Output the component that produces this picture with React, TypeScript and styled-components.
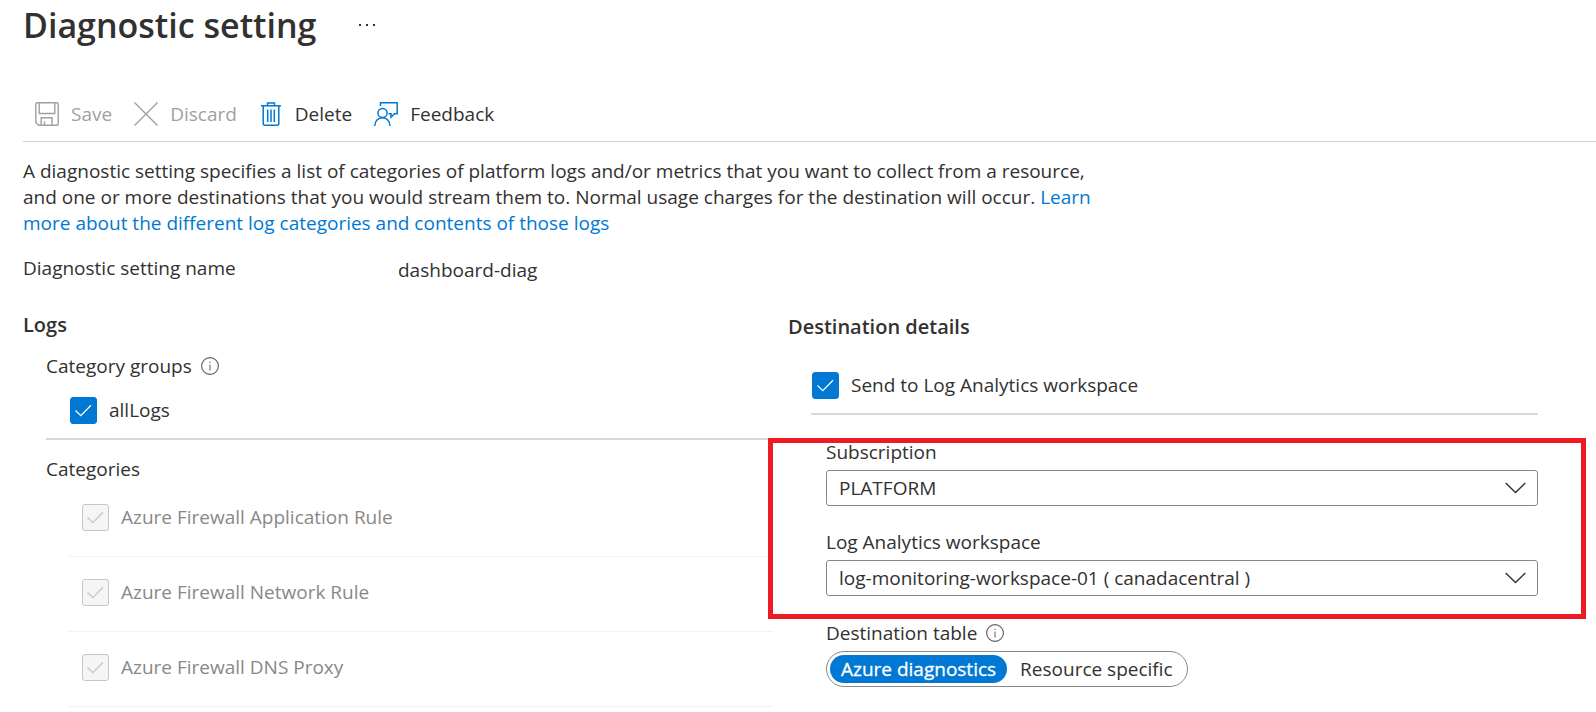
import React, { useState } from "react";
import styled, { createGlobalStyle, css } from "styled-components";

const blue = "#0078d4";
const ink = "#323130";

const GlobalStyle = createGlobalStyle`
  *, *::before, *::after { box-sizing: border-box; }
  body {
    margin: 0;
    background: #fff;
    color: ${ink};
    font-family: "Segoe UI", "Open Sans", "Noto Sans", sans-serif;
    font-size: 19px;
    line-height: 26px;
  }
  button, input, select { font: inherit; color: inherit; }
`;

const Page = styled.main`
  padding-left: 23px;
`;

const TitleBar = styled.header`
  display: flex;
  align-items: center;
  gap: 42px;
  height: 50px;
`;

const Title = styled.h1`
  margin: 0;
  font-size: 34px;
  line-height: 50px;
  font-weight: 600;
`;

const MoreButton = styled.button`
  display: flex;
  padding: 0;
  border: 0;
  background: none;
`;

const Toolbar = styled.nav`
  display: flex;
  align-items: center;
  gap: 22px;
  margin-top: 36px;
  padding: 0 12px;
  height: 56px;
  border-bottom: 1px solid #d2d0ce;
`;

const ToolButton = styled.button`
  display: flex;
  align-items: center;
  gap: 12px;
  padding: 0;
  border: 0;
  background: none;
  white-space: nowrap;

  &:disabled { color: #a19f9d; }
`;

const Intro = styled.p`
  max-width: 1090px;
  margin: 16px 0 0;
`;

const Link = styled.a`
  color: ${blue};
  text-decoration: none;
`;

const NameRow = styled.dl`
  display: grid;
  grid-template-columns: 375px 1fr;
  margin: 19px 0 0;
`;

const NameLabel = styled.dt``;

const NameValue = styled.dd`
  margin: 0;
  padding-top: 2px;
`;

const Columns = styled.div`
  display: grid;
  grid-template-columns: 1fr 1fr;
  gap: 15px;
  margin-top: 29px;
  padding-right: 58px;
`;

const Column = styled.section<{ $drop?: boolean }>`
  min-width: 0;
  padding-top: ${(p) => (p.$drop ? 2 : 0)}px;
`;

const Heading = styled.h2`
  margin: 0;
  font-size: 20px;
  line-height: 26px;
  font-weight: 600;
`;

const LogsBody = styled.div`
  margin: 15px 0 0 23px;
`;

const Caption = styled.div`
  display: flex;
  align-items: center;
  gap: 9px;
`;

const GroupRow = styled.div`
  padding: 18px 0 14px 24px;
  border-bottom: 2px solid #d9d8d7;
  margin-bottom: 16px;
`;

const CategoryList = styled.ul`
  list-style: none;
  margin: 0 0 0 22px;
  padding: 0;
`;

const CategoryItem = styled.li`
  padding: 22px 0 25px 14px;
  border-bottom: 1px solid #f3f2f1;
`;

const CheckLabel = styled.label<{ $disabled?: boolean }>`
  display: flex;
  align-items: flex-start;
  gap: 12px;
  height: 27px;
  color: ${(p) => (p.$disabled ? "#8a8886" : ink)};
`;

const CheckBox = styled.span`
  display: grid;
  width: 27px;
  height: 27px;

  > * { grid-area: 1 / 1; }
`;

const CheckInput = styled.input`
  appearance: none;
  width: 27px;
  height: 27px;
  margin: 0;
  border: 1px solid #8a8886;
  border-radius: 3px;
  background: #fff;

  & + svg { visibility: hidden; pointer-events: none; }
  &:checked { border-color: ${blue}; background: ${blue}; }
  &:checked + svg { visibility: visible; color: #fff; }
  &:disabled { border-color: #c8c6c4; background: #f5f5f4; }
  &:disabled + svg { color: #c8c6c4; }
`;

const SendRow = styled.div`
  margin: 32px 0 0 23px;
  padding: 0 0 14px 1px;
  border-bottom: 2px solid #d9d8d7;
`;

const Fields = styled.div`
  margin-left: 38px;
`;

const Marked = styled.div`
  position: relative;
  display: grid;
  gap: 23px;
  padding-top: 24px;
`;

const RedFrame = styled.div`
  position: absolute;
  inset: 23px -48px -23px -58px;
  border: 5px solid #ed1c24;
  pointer-events: none;
`;

const Field = styled.div`
  display: flex;
  flex-direction: column;
  gap: 5px;
`;

const SelectBox = styled.div`
  display: grid;
  align-items: center;

  > * { grid-area: 1 / 1; }
  > svg { justify-self: end; margin-right: 12px; pointer-events: none; }
`;

const Select = styled.select`
  appearance: none;
  width: 100%;
  height: 36px;
  padding: 0 44px 0 12px;
  border: 1px solid #8a8886;
  border-radius: 3px;
  background: #fff;
`;

const TableChoice = styled.fieldset`
  margin: 24px 0 0;
  padding: 0;
  border: 0;
  min-width: 0;
`;

const TableLegend = styled.legend`
  display: flex;
  align-items: center;
  gap: 9px;
  padding: 0;
`;

const Pill = styled.div`
  display: inline-flex;
  gap: 2px;
  margin-top: 5px;
  padding: 3px;
  border: 1px solid #8a8886;
  border-radius: 18px;
`;

const PillOption = styled.label<{ $on: boolean }>`
  display: grid;
  padding: 0 11px;
  border-radius: 14px;
  line-height: 28px;
  white-space: nowrap;
  ${(p) => p.$on && css`background: ${blue}; color: #fff; -webkit-text-stroke: 0.3px #fff;`}

  > * { grid-area: 1 / 1; }
`;

const HiddenRadio = styled.input`
  appearance: none;
  margin: 0;
`;

const SaveIcon = () => (
  <svg width="24" height="24" viewBox="0 0 24 24" fill="none" stroke="currentColor" strokeWidth="1.4" aria-hidden="true">
    <path d="M2 .8H22Q23.2 .8 23.2 2V22Q23.2 23.2 22 23.2H3.6L.8 20.4V2Q.8 .8 2 .8Z" />
    <path d="M4.2 1V11.5H19.8V1" />
    <path d="M6.2 23V15.8H17V23M9.5 23V19.3" />
  </svg>
);

const DiscardIcon = () => (
  <svg width="24" height="24" viewBox="0 0 24 24" fill="none" stroke="currentColor" strokeWidth="1.4" aria-hidden="true">
    <path d="M.5 .5L23.5 23.5M23.5 .5L.5 23.5" />
  </svg>
);

const DeleteIcon = () => (
  <svg width="24" height="24" viewBox="0 0 24 24" fill="none" stroke={blue} strokeWidth="1.5" aria-hidden="true">
    <path d="M2 3.8H22" />
    <path d="M8.5 3.5V1H15.5V3.5" />
    <path d="M4.2 4V21.5Q4.2 23.2 6 23.2H18Q19.8 23.2 19.8 21.5V4" />
    <path d="M8.7 7.5V20M12 7.5V20M15.3 7.5V20" />
  </svg>
);

const FeedbackIcon = () => (
  <svg width="24" height="24" viewBox="0 0 24 24" fill="none" stroke={blue} strokeWidth="1.5" aria-hidden="true">
    <path d="M6.5 4V.8H23.2V11.8H20.5L17 15.2V11.8H14.5" />
    <circle cx="8.5" cy="11" r="4.6" />
    <path d="M.8 24C.8 19 4 15.7 8.4 15.7S16 19 16 24" />
  </svg>
);

const InfoIcon = () => (
  <svg width="18" height="18" viewBox="0 0 18 18" fill="none" stroke="#605e5c" aria-hidden="true">
    <circle cx="9" cy="9" r="8.4" strokeWidth="1.1" />
    <path d="M9 7.5V13.5M9 4.8V6" strokeWidth="1" />
  </svg>
);

const CheckIcon = () => (
  <svg width="27" height="27" viewBox="0 0 27 27" fill="none" stroke="currentColor" strokeWidth="1.3" aria-hidden="true">
    <path d="M5.5 13.5L10.8 18.6L21 8.2" />
  </svg>
);

const ChevronIcon = () => (
  <svg width="21" height="12" viewBox="0 0 21 12" fill="none" stroke={ink} strokeWidth="1.4" aria-hidden="true">
    <path d="M.7 1L10.5 10.6L20.3 1" />
  </svg>
);

const MoreIcon = () => (
  <svg width="18" height="4" viewBox="0 0 18 4" fill={ink} aria-hidden="true">
    <rect x="1" y="1" width="2" height="2" />
    <rect x="8" y="1" width="2" height="2" />
    <rect x="15" y="1" width="2" height="2" />
  </svg>
);

type CheckProps = { label: string; disabled?: boolean };

const Check = ({ label, disabled }: CheckProps) => (
  <CheckLabel $disabled={disabled}>
    <CheckBox>
      <CheckInput type="checkbox" defaultChecked disabled={disabled} />
      <CheckIcon />
    </CheckBox>
    {label}
  </CheckLabel>
);

type DropDownProps = { id: string; label: string; value: string };

const DropDown = ({ id, label, value }: DropDownProps) => (
  <Field>
    <label htmlFor={id}>{label}</label>
    <SelectBox>
      <Select id={id}>
        <option>{value}</option>
      </Select>
      <ChevronIcon />
    </SelectBox>
  </Field>
);

const categories = [
  "Azure Firewall Application Rule",
  "Azure Firewall Network Rule",
  "Azure Firewall DNS Proxy",
];

const tables = ["Azure diagnostics", "Resource specific"];

export default function App() {
  const [table, setTable] = useState(tables[0]);

  return (
    <>
      <GlobalStyle />
      <Page>
        <TitleBar>
          <Title>Diagnostic setting</Title>
          <MoreButton type="button" aria-label="More">
            <MoreIcon />
          </MoreButton>
        </TitleBar>

        <Toolbar>
          <ToolButton type="button" disabled><SaveIcon />Save</ToolButton>
          <ToolButton type="button" disabled><DiscardIcon />Discard</ToolButton>
          <ToolButton type="button"><DeleteIcon />Delete</ToolButton>
          <ToolButton type="button"><FeedbackIcon />Feedback</ToolButton>
        </Toolbar>

        <Intro>
          A diagnostic setting specifies a list of categories of platform logs and/or metrics that you
          want to collect from a resource, and one or more destinations that you would stream them to.
          Normal usage charges for the destination will occur.{" "}
          <Link href="#learn">
            Learn more about the different log categories and contents of those logs
          </Link>
        </Intro>

        <NameRow>
          <NameLabel>Diagnostic setting name</NameLabel>
          <NameValue>dashboard-diag</NameValue>
        </NameRow>

        <Columns>
          <Column>
            <Heading>Logs</Heading>
            <LogsBody>
              <Caption>Category groups <InfoIcon /></Caption>
              <GroupRow><Check label="allLogs" /></GroupRow>
              <Caption>Categories</Caption>
              <CategoryList>
                {categories.map((name) => (
                  <CategoryItem key={name}><Check label={name} disabled /></CategoryItem>
                ))}
              </CategoryList>
            </LogsBody>
          </Column>

          <Column $drop>
            <Heading>Destination details</Heading>
            <SendRow><Check label="Send to Log Analytics workspace" /></SendRow>
            <Fields>
              <Marked>
                <DropDown id="subscription" label="Subscription" value="PLATFORM" />
                <DropDown
                  id="workspace"
                  label="Log Analytics workspace"
                  value="log-monitoring-workspace-01 ( canadacentral )"
                />
                <RedFrame />
              </Marked>
              <TableChoice>
                <TableLegend>Destination table <InfoIcon /></TableLegend>
                <Pill>
                  {tables.map((name) => (
                    <PillOption key={name} $on={table === name}>
                      <HiddenRadio
                        type="radio"
                        name="table"
                        checked={table === name}
                        onChange={() => setTable(name)}
                      />
                      <span>{name}</span>
                    </PillOption>
                  ))}
                </Pill>
              </TableChoice>
            </Fields>
          </Column>
        </Columns>
      </Page>
    </>
  );
}
